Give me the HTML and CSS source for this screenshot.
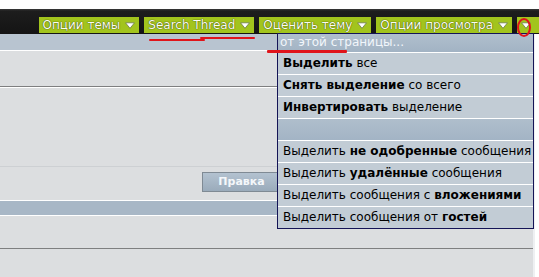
FILE: index.html
```html
<!DOCTYPE html>
<html lang="ru">
<head>
<meta charset="utf-8">
<title>Thread tools</title>
<link rel="stylesheet" href="styles.css">
</head>
<body>
<div class="topbar">
  <div class="tb-btn"><span>Опции темы</span><svg class="arr" width="10" height="7" viewBox="0 0 10 7"><polygon points="0.5,0.8 9.5,0.8 5,6.3" /></svg></div>
  <div class="tb-btn"><span>Search Thread</span><svg class="arr" width="10" height="7" viewBox="0 0 10 7"><polygon points="0.5,0.8 9.5,0.8 5,6.3" /></svg></div>
  <div class="tb-btn"><span>Оценить тему</span><svg class="arr" width="10" height="7" viewBox="0 0 10 7"><polygon points="0.5,0.8 9.5,0.8 5,6.3" /></svg></div>
  <div class="tb-btn"><span>Опции просмотра</span><svg class="arr" width="10" height="7" viewBox="0 0 10 7"><polygon points="0.5,0.8 9.5,0.8 5,6.3" /></svg></div>
  <div class="tb-btn last"><svg class="arr" width="10" height="7" viewBox="0 0 10 7"><polygon points="0.5,0.8 9.5,0.8 5,6.3" /></svg></div>
</div>
<div class="content">
  <div class="band light"></div>
  <div class="row r1"></div>
  <div class="row r2"></div>
  <div class="row r3"><div class="btn">Правка</div></div>
  <div class="band blue"></div>
  <div class="row r4"></div>
  <div class="row r5"></div>
</div>

<div class="menu">
  <div class="m-head">от этой страницы...</div>
  <div class="m-item"><b>Выделить</b> все</div>
  <div class="m-item"><b>Снять выделение</b> со всего</div>
  <div class="m-item"><b>Инвертировать</b> выделение</div>
  <div class="m-item m-sep"></div>
  <div class="m-item">Выделить <b>не одобренные</b> сообщения</div>
  <div class="m-item">Выделить <b>удалённые</b> сообщения</div>
  <div class="m-item">Выделить сообщения с <b>вложениями</b></div>
  <div class="m-item">Выделить сообщения от <b>гостей</b></div>
</div>

<div class="mark mark-a"></div>
<div class="mark mark-b"></div>
<div class="mark mark-c"></div>
<div class="ring"></div>
</body>
</html>
```

FILE: styles.css
```css
html, body {
  margin: 0;
  padding: 0;
  background: #ffffff;
  font-family: "DejaVu Sans", Verdana, sans-serif;
}
body {
  padding-top: 9px;
  position: relative;
  width: 539px;
  height: 277px;
  overflow: hidden;
  box-sizing: border-box;
}

.topbar {
  height: 25px;
  background: linear-gradient(#3a3a3a 0, #1d1d1d 2px, #141414 100%);
  display: flex;
  justify-content: flex-end;
  align-items: flex-end;
  gap: 5px;
  padding-bottom: 1px;
  box-sizing: border-box;
}
.tb-btn {
  height: 16px;
  background: #a2c41d;
  display: flex;
  align-items: center;
  padding: 0 4px 0 4px;
  gap: 5px;
  color: #fbfdf0;
  font-size: 12px;
  line-height: 16px;
  text-shadow: 0 0 1px #3f4d00, 0 0 1px #3f4d00;
  white-space: nowrap;
}
.tb-btn.last {
  width: 22px;
  padding: 0 0 0 4px;
  box-sizing: border-box;
}
.arr polygon {
  fill: #ffffff;
  stroke: #6b7a4a;
  stroke-width: 0.8;
}

.content {
  width: 535px;
  background: #dcdee0;
  border-right: 2px solid #eef0f2;
  box-sizing: border-box;
  height: 243px;
}
.band {
  border-bottom: 1px solid #ffffff;
}
.band.light {
  height: 16px;
  background: #b8c4d0;
}
.band.blue {
  height: 14px;
  background: #a8b7c6;
  border-top: 1px solid #ffffff;
}
.r1 {
  height: 35px;
  border-bottom: 1px solid #7e7f80;
  box-shadow: 0 1px 0 #ffffff;
}
.r2 {
  height: 78px;
  margin-top: 1px;
  border-bottom: 1px solid #cdd0d3;
}
.r3 {
  height: 33px;
  padding: 5px 0 0 202px;
  box-sizing: border-box;
}
.btn {
  width: 79px;
  height: 20px;
  box-sizing: border-box;
  border: 1px solid #7f8a94;
  background: linear-gradient(#b3c2d0, #9aabbb);
  color: #f4f7fa;
  font-size: 11px;
  font-weight: bold;
  line-height: 18px;
  text-align: center;
}
.r4 {
  height: 32px;
  border-bottom: 1px solid #7e7f80;
}
.r5 {
  height: 26px;
}

.menu {
  position: absolute;
  left: 277px;
  top: 33px;
  width: 257px;
  box-sizing: border-box;
  border: 1px solid #141456;
  background: #c2ccd5;
  font-size: 12px;
  color: #000;
}
.m-head {
  height: 18px;
  background: linear-gradient(#b0bfcd, #a2b3c4);
  color: #f2f6fb;
  line-height: 17px;
  padding-left: 2px;
}
.m-item {
  height: 22px;
  box-sizing: border-box;
  border-top: 1px solid #ffffff;
  line-height: 20px;
  padding-left: 5px;
  white-space: nowrap;
}
.m-sep {
  background: linear-gradient(#afbecc, #a3b4c5);
}

.mark {
  position: absolute;
  background: #e0141a;
  border-radius: 1px;
}
.mark-a {
  left: 149px;
  top: 39px;
  width: 56px;
  height: 2px;
}
.mark-b {
  left: 200px;
  top: 37px;
  width: 55px;
  height: 2px;
}
.mark-c {
  left: 267px;
  top: 50px;
  width: 80px;
  height: 3px;
}
.ring {
  position: absolute;
  left: 517px;
  top: 18px;
  width: 10px;
  height: 15px;
  border: 2px solid #e0141a;
  border-radius: 50%;
}
```
